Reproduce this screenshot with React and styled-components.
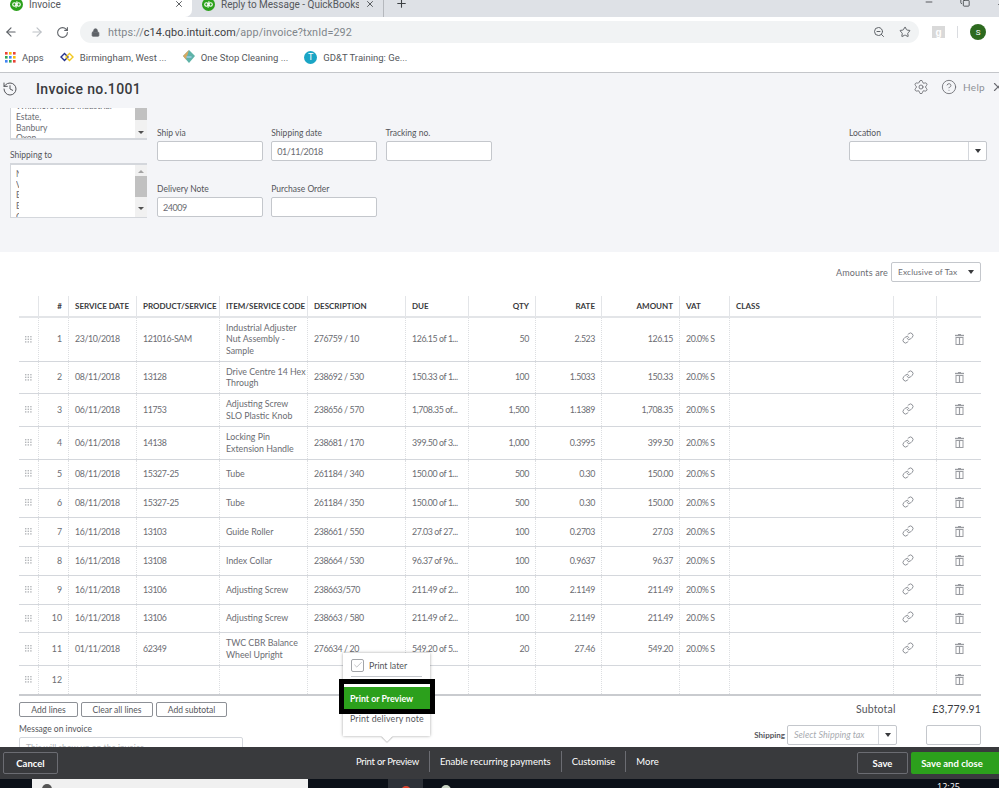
import React from "react";
import styled, { createGlobalStyle } from "styled-components";
import {
  ArrowLeft,
  ArrowRight,
  RotateCw,
  Lock,
  ZoomOut,
  Star,
  Settings,
  CircleHelp,
  History,
  X,
  Plus,
  Link as LinkIcon,
  Check,
  Minus,
  Copy,
} from "lucide-react";

const GlobalStyle = createGlobalStyle`
  html, body {
    margin: 0;
    padding: 0;
    background: #fff;
    overflow: hidden;
  }
  * {
    box-sizing: border-box;
  }
`;

const rows = [
  { n: 1, date: "23/10/2018", product: "121016-SAM", item: "Industrial Adjuster\nNut Assembly -\nSample", desc: "276759 / 10", due: "126.15 of 1...", qty: "50", rate: "2.523", amount: "126.15", h: 44 },
  { n: 2, date: "08/11/2018", product: "13128", item: "Drive Centre 14 Hex\nThrough", desc: "238692 / 530", due: "150.33 of 1...", qty: "100", rate: "1.5033", amount: "150.33", h: 32 },
  { n: 3, date: "06/11/2018", product: "11753", item: "Adjusting Screw\nSLO Plastic Knob", desc: "238656 / 570", due: "1,708.35 of...", qty: "1,500", rate: "1.1389", amount: "1,708.35", h: 33 },
  { n: 4, date: "06/11/2018", product: "14138", item: "Locking Pin\nExtension Handle", desc: "238681 / 170", due: "399.50 of 3...", qty: "1,000", rate: "0.3995", amount: "399.50", h: 33 },
  { n: 5, date: "08/11/2018", product: "15327-25", item: "Tube", desc: "261184 / 340", due: "150.00 of 1...", qty: "500", rate: "0.30", amount: "150.00", h: 29 },
  { n: 6, date: "08/11/2018", product: "15327-25", item: "Tube", desc: "261184 / 350", due: "150.00 of 1...", qty: "500", rate: "0.30", amount: "150.00", h: 29 },
  { n: 7, date: "16/11/2018", product: "13103", item: "Guide Roller", desc: "238661 / 550", due: "27.03 of 27...", qty: "100", rate: "0.2703", amount: "27.03", h: 29 },
  { n: 8, date: "16/11/2018", product: "13108", item: "Index Collar", desc: "238664 / 530", due: "96.37 of 96...", qty: "100", rate: "0.9637", amount: "96.37", h: 29 },
  { n: 9, date: "16/11/2018", product: "13106", item: "Adjusting Screw", desc: "238663/570", due: "211.49 of 2...", qty: "100", rate: "2.1149", amount: "211.49", h: 29 },
  { n: 10, date: "16/11/2018", product: "13106", item: "Adjusting Screw", desc: "238663 / 580", due: "211.49 of 2...", qty: "100", rate: "2.1149", amount: "211.49", h: 28 },
  { n: 11, date: "01/11/2018", product: "62349", item: "TWC CBR Balance\nWheel Upright", desc: "276634 / 20", due: "549.20 of 5...", qty: "20", rate: "27.46", amount: "549.20", h: 33 },
];

const QbLogo = () => (
  <svg width="13" height="13" viewBox="0 0 13 13">
    <circle cx="6.5" cy="6.5" r="6.5" fill="#2ca01c" />
    <circle cx="4.4" cy="6.5" r="1.7" fill="none" stroke="#fff" strokeWidth="1.1" />
    <circle cx="8.6" cy="6.5" r="1.7" fill="none" stroke="#fff" strokeWidth="1.1" />
    <path d="M6.1 4.8v5M6.9 3.2v5" stroke="#fff" strokeWidth="1" />
  </svg>
);

const AppsGrid = () => {
  const colors = ["#ea4335", "#fbbc05", "#ea4335", "#34a853", "#4285f4", "#fbbc05", "#4285f4", "#34a853", "#ea4335"];
  return (
    <svg width="11" height="11" viewBox="0 0 11 11">
      {colors.map((c, i) => (
        <rect key={i} x={(i % 3) * 4} y={Math.floor(i / 3) * 4} width="2.6" height="2.6" fill={c} />
      ))}
    </svg>
  );
};

const DiamondsIcon = () => (
  <svg width="14" height="10" viewBox="0 0 14 10">
    <path d="M4.5 1.5L8 5 4.5 8.5 1 5z" fill="none" stroke="#27348b" strokeWidth="1.4" />
    <path d="M9.5 1.5L13 5 9.5 8.5 6 5z" fill="none" stroke="#f2c81e" strokeWidth="1.4" />
  </svg>
);

const CleaningIcon = () => (
  <svg width="12" height="14" viewBox="0 0 12 14">
    <path d="M6 0l6 6-6 7-6-7z" fill="#5fb3a8" />
    <path d="M6 0L0 6l3 3.5z" fill="#d9a860" />
    <path d="M3.5 6h5v2h-5z" fill="#8cc6d8" />
  </svg>
);

const GripIcon = () => (
  <svg width="7" height="7" viewBox="0 0 7 7">
    {[0, 1, 2].flatMap((r) =>
      [0, 1, 2].map((c) => <rect key={`${r}${c}`} x={c * 2.6} y={r * 2.6} width="1.4" height="1.4" fill="#b4b6ba" />)
    )}
  </svg>
);

const TrashIcon = () => (
  <svg width="9" height="11" viewBox="0 0 9 11" fill="none" stroke="#9a9ca1">
    <path d="M0 1.5h9" strokeWidth="1.4" />
    <path d="M3 0.5h3" strokeWidth="1" />
    <rect x="1" y="3.5" width="7" height="7" strokeWidth="1" />
    <path d="M4.5 3.5v7" strokeWidth="1.2" />
  </svg>
);

const Caret = styled.span`
  display: block;
  width: 0;
  height: 0;
  border-left: 3.5px solid transparent;
  border-right: 3.5px solid transparent;
  border-top: 4px solid #393a3d;
`;

const Page = styled.div`
  position: relative;
  display: flex;
  flex-direction: column;
  width: 999px;
  height: 788px;
  overflow: hidden;
  font-family: Lato, "Open Sans", sans-serif;
  color: #6b6c72;
`;

const TabStrip = styled.div`
  display: flex;
  align-items: flex-start;
  height: 17px;
  flex: none;
  overflow: hidden;
  background: #dee1e6;
  font-family: Roboto, sans-serif;
  font-size: 10px;
  color: #55585c;
`;

const Tab = styled.div`
  display: flex;
  align-items: center;
  gap: 6px;
  width: 192px;
  height: 17px;
  padding: 0 8px 9px 10px;
  background: ${(p) => (p.$active ? "#fff" : "transparent")};
  border-bottom-right-radius: ${(p) => (p.$active ? "7px" : "0")};
  border-right: ${(p) => (p.$active ? "none" : "1px solid #b5b8bd")};
`;

const TabTitle = styled.span`
  flex: 1;
  white-space: nowrap;
  overflow: hidden;
`;

const NewTab = styled.span`
  display: flex;
  margin: -3px 0 0 11px;
  color: #3c4043;
`;

const WindowControls = styled.div`
  display: flex;
  gap: 26px;
  margin: -3px -7px 0 auto;
  color: #3c4043;
`;

const Toolbar = styled.div`
  display: flex;
  align-items: center;
  height: 26px;
  flex: none;
  padding: 4px 0 0 4px;
  gap: 12px;
  background: #fff;
`;

const Omnibox = styled.div`
  display: flex;
  align-items: center;
  width: 839px;
  height: 22px;
  margin-left: -1px;
  padding: 0 8px 0 11px;
  border-radius: 11px;
  background: #f1f3f4;
  color: #5f6368;
`;

const Url = styled.span`
  flex: 1;
  margin-left: 8px;
  font-family: Roboto, sans-serif;
  font-size: 10.8px;
  letter-spacing: 0.1px;
  white-space: nowrap;
  color: #80868b;

  b {
    font-weight: 400;
    color: #3c4043;
  }
`;

const OmniIcons = styled.div`
  display: flex;
  align-items: center;
  gap: 14px;
  color: #5f6368;
`;

const Extension = styled.span`
  display: flex;
  align-items: center;
  justify-content: center;
  width: 13px;
  height: 12px;
  margin-left: 1px;
  background: #d9d9d9;
  font-family: "Liberation Sans", sans-serif;
  font-size: 10px;
  font-weight: 700;
  color: #fff;
`;

const ToolbarDivider = styled.span`
  width: 1px;
  height: 12px;
  background: #dadce0;
`;

const Avatar = styled.span`
  display: flex;
  align-items: center;
  justify-content: center;
  width: 16px;
  height: 16px;
  border-radius: 50%;
  background: #2d6a1f;
  font-family: Roboto, sans-serif;
  font-size: 8px;
  color: #fff;
`;

const Bookmarks = styled.div`
  display: flex;
  align-items: center;
  height: 30px;
  flex: none;
  padding: 0 0 1px 5px;
  gap: 16px;
  background: #fff;
  border-bottom: 1px solid #c4c6ca;
  font-family: Roboto, sans-serif;
  font-size: 9.5px;
  color: #55585c;
`;

const Bookmark = styled.span`
  display: flex;
  align-items: center;
  gap: 6px;
  white-space: nowrap;
`;

const BookmarkT = styled.span`
  display: flex;
  align-items: center;
  justify-content: center;
  width: 13px;
  height: 13px;
  border-radius: 50%;
  background: #1aa5c5;
  font-size: 9px;
  color: #fff;
`;

const Main = styled.div`
  flex: 1;
  min-height: 0;
  overflow: hidden;
  background: #fff;
`;

const Header = styled.header`
  display: flex;
  align-items: center;
  height: 35px;
  padding: 0 0 3px 2px;
  background: #f4f5f8;
`;

const Title = styled.h1`
  margin: 0 0 0 18px;
  font-family: Roboto, sans-serif;
  font-size: 14px;
  font-weight: 500;
  letter-spacing: 0.35px;
  color: #393a3d;
`;

const HeaderTools = styled.div`
  display: flex;
  align-items: center;
  margin: -4px -6px 0 auto;
  color: #6b6c72;
`;

const HelpIcon = styled(CircleHelp)`
  margin-left: 12px;
`;

const HelpLabel = styled.span`
  margin: 0 6px 0 6px;
  font-size: 10px;
  letter-spacing: 0.3px;
  color: #8d9096;
`;

const FormPanel = styled.section`
  display: flex;
  height: 144px;
  padding-left: 10px;
  background: #f4f5f8;
`;

const AddressColumn = styled.div`
  display: flex;
  flex-direction: column;
  width: 137px;
`;

const Label = styled.label`
  display: block;
  height: 14px;
  margin-bottom: 1px;
  font-size: 8.5px;
  line-height: 14px;
  color: #55565b;
  white-space: nowrap;
`;

const AddressBox = styled.div`
  display: flex;
  height: ${(p) => p.$h}px;
  background: #fff;
  border: solid #d4d7dc;
  border-width: ${(p) => (p.$top ? "2px 0 1px 1px" : "0 0 2px 1px")};
  overflow: hidden;
`;

const AddressText = styled.div`
  flex: 1;
  display: flex;
  flex-direction: column;
  justify-content: ${(p) => (p.$bottom ? "flex-start" : "flex-end")};
  padding: ${(p) => (p.$bottom ? "4px 0 0 5px" : "0 0 0 5px")};
  margin-bottom: ${(p) => (p.$bottom ? "0" : "-6px")};
  font-size: 8.5px;
  line-height: 10.7px;
  white-space: nowrap;
`;

const MaskedLine = styled.span`
  display: block;
  width: 3px;
  overflow: hidden;
  flex: none;
`;

const Scrollbar = styled.div`
  display: flex;
  flex-direction: column;
  align-items: center;
  flex: none;
  width: 12px;
  background: #f1f1f1;
`;

const ScrollArrow = styled.span`
  display: block;
  flex: none;
  width: 0;
  height: 0;
  margin: ${(p) => p.$margin};
  border-left: 3.5px solid transparent;
  border-right: 3.5px solid transparent;
  ${(p) => (p.$up ? "border-bottom: 3px solid #a3a3a3;" : "border-top: 3px solid #505050;")}
`;

const ScrollThumb = styled.span`
  display: block;
  flex: none;
  width: 100%;
  height: ${(p) => p.$h}px;
  background: #c1c1c1;
`;

const ShippingLabel = styled(Label)`
  margin: 8px 0 1px;
`;

const FieldGrid = styled.div`
  display: grid;
  grid-template-columns: repeat(3, 106px);
  column-gap: 8.3px;
  row-gap: 21px;
  align-content: start;
  margin-left: 10px;
  padding-top: 18px;
`;

const Input = styled.div`
  display: flex;
  align-items: center;
  height: 20px;
  padding-left: 5px;
  background: #fff;
  border: 1px solid #c4c7cc;
  border-radius: 2px;
  font-size: 9px;
  letter-spacing: -0.45px;
  color: #6b6c72;
`;

const LocationField = styled.div`
  width: 138px;
  margin-left: auto;
  margin-right: 12px;
  padding-top: 18px;
`;

const SelectBox = styled.div`
  display: flex;
  align-items: stretch;
  width: ${(p) => p.$w || "100%"};
  height: 20px;
  background: #fff;
  border: 1px solid #c4c7cc;
  border-radius: 2px;
`;

const SelectValue = styled.span`
  flex: 1;
  min-width: 0;
  padding-left: 6px;
  font-size: ${(p) => (p.$placeholder ? "9px" : "8.3px")};
  line-height: 18px;
  font-style: ${(p) => (p.$placeholder ? "italic" : "normal")};
  color: ${(p) => (p.$placeholder ? "#a8abb0" : "#6b6c72")};
  white-space: nowrap;
`;

const SelectCaret = styled.span`
  display: flex;
  align-items: center;
  justify-content: center;
  flex: none;
  width: 18px;
  border-left: ${(p) => (p.$plain ? "none" : "1px solid #d4d7dc")};
`;

const TableSection = styled.section`
  padding: 10px 18px 0 19px;
  background: #fff;
`;

const AmountsRow = styled.div`
  display: flex;
  align-items: center;
  justify-content: flex-end;
  gap: 3px;
  height: 20px;
  margin-bottom: 14px;
  font-size: 9px;
  letter-spacing: 0.15px;
`;

const columns = "20px 30px 68px 83px 88px 98px 63px 67px 66px 78px 50px 164px 43px 44px";

const Row = styled.div`
  display: grid;
  grid-template-columns: ${columns};
  height: ${(p) => p.$h}px;
  border-bottom: ${(p) => p.$line || "1px solid #d4d7dc"};
`;

const HeadCell = styled.div`
  display: flex;
  align-items: center;
  justify-content: ${(p) => (p.$right ? "flex-end" : "flex-start")};
  padding: 0 6px 1px;
  border-right: ${(p) => (p.$last ? "none" : "1px solid #e3e5e8")};
  font-size: 8px;
  font-weight: 700;
  color: #393a3d;
  white-space: nowrap;
`;

const Cell = styled.div`
  display: flex;
  align-items: center;
  justify-content: ${(p) => (p.$right ? "flex-end" : p.$center ? "center" : "flex-start")};
  padding: 0 6px 1px;
  border-right: ${(p) => (p.$last ? "none" : "1px dotted #dcdee1")};
  font-size: 8.8px;
  line-height: 11.5px;
  color: #6b6c72;
  min-width: 0;
  ${(p) => p.$num && "letter-spacing: -0.4px; white-space: nowrap;"}
`;

const ItemCell = styled(Cell)`
  padding-right: 0;
  white-space: pre;
`;

const LinkCell = styled(Cell)`
  padding: 0 0 3px 8px;
`;

const BelowTable = styled.div`
  display: flex;
  justify-content: space-between;
  padding-top: 6px;
`;

const LeftActions = styled.div`
  width: 224px;
`;

const LineButtons = styled.div`
  display: flex;
  gap: 3px;
`;

const LineButton = styled.button`
  width: ${(p) => p.$w}px;
  height: 15px;
  padding: 0;
  background: #fff;
  border: 1px solid #8d9096;
  border-radius: 2px;
  font-family: inherit;
  font-size: 8.5px;
  color: #55565b;
`;

const MessageLabel = styled(Label)`
  margin: 5px 0 1px;
`;

const MessageBox = styled.div`
  height: 40px;
  padding: 5px 6px;
  border: 1px solid #d4d7dc;
  border-radius: 2px;
  font-size: 8.5px;
  color: #b4b6ba;
  white-space: nowrap;
`;

const Totals = styled.div`
  display: flex;
  flex-direction: column;
  align-items: flex-end;
  padding-top: 1px;
`;

const SubtotalRow = styled.div`
  display: flex;
  justify-content: space-between;
  width: 125px;
  font-size: 10.5px;
  letter-spacing: 0.15px;
  line-height: 12px;
  color: #55565b;
`;

const SubtotalValue = styled.span`
  color: #393a3d;
`;

const ShippingRow = styled.div`
  display: flex;
  align-items: center;
  margin-top: 10px;
`;

const ShippingName = styled.span`
  margin-right: 2px;
  font-size: 8px;
  font-weight: 700;
  color: #55565b;
`;

const ShippingInput = styled(Input)`
  width: 55px;
  margin-left: 29px;
`;

const PrintMenu = styled.div`
  position: absolute;
  top: 653px;
  left: 343px;
  width: 87px;
  height: 83px;
  background: #fff;
  box-shadow: 0 0 3px rgba(0, 0, 0, 0.35);
  font-size: 8.8px;
  color: #55565b;

  &::after {
    content: "";
    position: absolute;
    left: 40px;
    bottom: -4px;
    width: 8px;
    height: 8px;
    background: #fff;
    transform: rotate(45deg);
    box-shadow: 1px 1px 1px rgba(0, 0, 0, 0.2);
  }
`;

const PrintLater = styled.div`
  display: flex;
  align-items: center;
  gap: 5px;
  height: 24px;
  margin: 0 8px;
  padding-top: 1px;
  border-bottom: 1px solid #c4c7cc;
`;

const CheckBox = styled.span`
  display: flex;
  align-items: center;
  justify-content: center;
  width: 13px;
  height: 13px;
  border: 1px solid #a3a5a9;
  border-radius: 2px;
  color: #b4b6ba;
`;

const Highlight = styled.div`
  position: absolute;
  top: 26px;
  left: -4px;
  display: flex;
  width: 96px;
  height: 35px;
  padding-top: 3px;
  background: #fff;
  border: 5px solid #000;
`;

const GreenItem = styled.div`
  flex: 1;
  display: flex;
  align-items: center;
  padding-left: 6px;
  background: #2ca01c;
  font-weight: 700;
  font-size: 8.8px;
  color: #fff;
  white-space: nowrap;
`;

const PrintNote = styled.div`
  position: absolute;
  top: 60px;
  left: 7px;
  letter-spacing: 0.15px;
  white-space: nowrap;
`;

const Footer = styled.footer`
  display: flex;
  align-items: center;
  flex: none;
  height: 32px;
  padding-left: 3px;
  background: #393a3d;
  color: #fff;
`;

const DarkButton = styled.button`
  width: ${(p) => p.$w}px;
  height: 22px;
  padding: 0;
  background: transparent;
  border: 1px solid #6b6c72;
  border-radius: 2px;
  font-family: inherit;
  font-size: 9.5px;
  font-weight: 700;
  color: #fff;
`;

const FooterNav = styled.nav`
  display: flex;
  align-items: center;
  margin: -3px 0 0 288px;
`;

const NavItem = styled.span`
  padding: 3px 10px;
  border-left: ${(p) => (p.$first ? "none" : "1px solid #6b6c72")};
  font-size: 9.5px;
  line-height: 15px;
  letter-spacing: ${(p) => (p.$first ? "-0.25px" : "0")};
  white-space: nowrap;
`;

const FooterActions = styled.div`
  display: flex;
  gap: 3px;
  margin-left: auto;
`;

const SaveClose = styled.button`
  width: 92px;
  height: 22px;
  margin-right: -4px;
  padding: 0 10px 0 0;
  background: #2ca01c;
  border: none;
  border-radius: 2px;
  font-family: inherit;
  font-size: 9.5px;
  font-weight: 700;
  color: #fff;
`;

const Taskbar = styled.div`
  display: flex;
  align-items: flex-start;
  flex: none;
  height: 9px;
  overflow: hidden;
  background: #0b1018;
`;

const TaskWindow = styled.div`
  width: 276px;
  height: 9px;
  margin-left: 32px;
  padding: 5px 0 0 10px;
  background: #f0f0f0;
`;

const TaskDot = styled.span`
  display: block;
  flex: none;
  width: ${(p) => p.$size}px;
  height: ${(p) => p.$size}px;
  border-radius: 50%;
  background: ${(p) => p.$color};
`;

const TaskActive = styled.div`
  display: flex;
  justify-content: center;
  width: 35px;
  height: 9px;
  margin-left: 80px;
  padding-top: 7px;
  background: #2d3138;
`;

const TaskChrome = styled.div`
  margin: 6px 0 0 18px;
`;

const Clock = styled.span`
  margin: 2px 39px 0 auto;
  font-family: "Open Sans", sans-serif;
  font-size: 9px;
  line-height: 11px;
  color: #fff;
`;

const App = () => {
  return (
    <Page>
      <GlobalStyle />
      <TabStrip>
        <Tab $active>
          <QbLogo />
          <TabTitle>Invoice</TabTitle>
          <X size={10} color="#3c4043" />
        </Tab>
        <Tab>
          <QbLogo />
          <TabTitle>Reply to Message - QuickBooks Online</TabTitle>
          <X size={10} color="#3c4043" />
        </Tab>
        <NewTab>
          <Plus size={13} />
        </NewTab>
        <WindowControls>
          <Minus size={10} />
          <Copy size={10} />
          <X size={10} />
        </WindowControls>
      </TabStrip>

      <Toolbar>
        <ArrowLeft size={14} color="#5f6368" />
        <ArrowRight size={14} color="#bdc1c6" />
        <RotateCw size={13} color="#5f6368" />
        <Omnibox>
          <Lock size={9} fill="#5f6368" />
          <Url>
            https://<b>c14.qbo.intuit.com</b>/app/invoice?txnId=292
          </Url>
          <OmniIcons>
            <ZoomOut size={12} />
            <Star size={12} />
          </OmniIcons>
        </Omnibox>
        <Extension>g</Extension>
        <ToolbarDivider />
        <Avatar>S</Avatar>
      </Toolbar>

      <Bookmarks>
        <Bookmark>
          <AppsGrid />
          Apps
        </Bookmark>
        <Bookmark>
          <DiamondsIcon />
          Birmingham, West ...
        </Bookmark>
        <Bookmark>
          <CleaningIcon />
          One Stop Cleaning ...
        </Bookmark>
        <Bookmark>
          <BookmarkT>T</BookmarkT>
          GD&amp;T Training: Ge...
        </Bookmark>
      </Bookmarks>

      <Main>
        <Header>
          <History size={16} strokeWidth={1.5} color="#55565b" />
          <Title>Invoice no.1001</Title>
          <HeaderTools>
            <Settings size={16} strokeWidth={1.3} />
            <HelpIcon size={16} strokeWidth={1.3} />
            <HelpLabel>Help</HelpLabel>
            <X size={14} />
          </HeaderTools>
        </Header>

        <FormPanel>
          <AddressColumn>
            <AddressBox $h={32}>
              <AddressText>
                <span>Whitmore Road Industrial</span>
                <span>Estate,</span>
                <span>Banbury</span>
                <span>Oxon</span>
              </AddressText>
              <Scrollbar>
                <ScrollThumb $h={12} />
                <ScrollArrow $margin="11px 0 0" />
              </Scrollbar>
            </AddressBox>
            <ShippingLabel>Shipping to</ShippingLabel>
            <AddressBox $h={55} $top>
              <AddressText $bottom>
                {["N", "V", "E", "E", "C"].map((letter, i) => (
                  <MaskedLine key={i}>{letter}</MaskedLine>
                ))}
              </AddressText>
              <Scrollbar>
                <ScrollArrow $up $margin="5px 0 3px" />
                <ScrollThumb $h={21} />
                <ScrollArrow $margin="10px 0 0" />
              </Scrollbar>
            </AddressBox>
          </AddressColumn>

          <FieldGrid>
            <div>
              <Label>Ship via</Label>
              <Input />
            </div>
            <div>
              <Label>Shipping date</Label>
              <Input>01/11/2018</Input>
            </div>
            <div>
              <Label>Tracking no.</Label>
              <Input />
            </div>
            <div>
              <Label>Delivery Note</Label>
              <Input>24009</Input>
            </div>
            <div>
              <Label>Purchase Order</Label>
              <Input />
            </div>
          </FieldGrid>

          <LocationField>
            <Label>Location</Label>
            <SelectBox>
              <SelectValue />
              <SelectCaret>
                <Caret />
              </SelectCaret>
            </SelectBox>
          </LocationField>
        </FormPanel>

        <TableSection>
          <AmountsRow>
            <span>Amounts are</span>
            <SelectBox $w="90px">
              <SelectValue>Exclusive of Tax</SelectValue>
              <SelectCaret $plain>
                <Caret />
              </SelectCaret>
            </SelectBox>
          </AmountsRow>

          <Row $h={22} $line="2px solid #e3e5e8">
            <HeadCell />
            <HeadCell $right>#</HeadCell>
            <HeadCell>SERVICE DATE</HeadCell>
            <HeadCell>PRODUCT/SERVICE</HeadCell>
            <HeadCell>ITEM/SERVICE CODE</HeadCell>
            <HeadCell>DESCRIPTION</HeadCell>
            <HeadCell>DUE</HeadCell>
            <HeadCell $right>QTY</HeadCell>
            <HeadCell $right>RATE</HeadCell>
            <HeadCell $right>AMOUNT</HeadCell>
            <HeadCell>VAT</HeadCell>
            <HeadCell>CLASS</HeadCell>
            <HeadCell />
            <HeadCell $last />
          </Row>

          {rows.map((row) => (
            <Row key={row.n} $h={row.h}>
              <Cell $center>
                <GripIcon />
              </Cell>
              <Cell $right>{row.n}</Cell>
              <Cell $num>{row.date}</Cell>
              <Cell $num>{row.product}</Cell>
              <ItemCell>{row.item}</ItemCell>
              <Cell $num>{row.desc}</Cell>
              <Cell $num>{row.due}</Cell>
              <Cell $right $num>{row.qty}</Cell>
              <Cell $right $num>{row.rate}</Cell>
              <Cell $right $num>{row.amount}</Cell>
              <Cell $num>20.0% S</Cell>
              <Cell />
              <LinkCell>
                <LinkIcon size={12} color="#8d9096" />
              </LinkCell>
              <Cell $center $last>
                <TrashIcon />
              </Cell>
            </Row>
          ))}

          <Row $h={30} $line="2px solid #c9cbcf">
            <Cell $center>
              <GripIcon />
            </Cell>
            <Cell $right>12</Cell>
            <Cell />
            <Cell />
            <Cell />
            <Cell />
            <Cell />
            <Cell />
            <Cell />
            <Cell />
            <Cell />
            <Cell />
            <Cell />
            <Cell $center $last>
              <TrashIcon />
            </Cell>
          </Row>

          <BelowTable>
            <LeftActions>
              <LineButtons>
                <LineButton $w={59}>Add lines</LineButton>
                <LineButton $w={72}>Clear all lines</LineButton>
                <LineButton $w={71}>Add subtotal</LineButton>
              </LineButtons>
              <MessageLabel>Message on invoice</MessageLabel>
              <MessageBox>This will show up on the invoice</MessageBox>
            </LeftActions>
            <Totals>
              <SubtotalRow>
                <span>Subtotal</span>
                <SubtotalValue>£3,779.91</SubtotalValue>
              </SubtotalRow>
              <ShippingRow>
                <ShippingName>Shipping</ShippingName>
                <SelectBox $w="110px">
                  <SelectValue $placeholder>Select Shipping tax</SelectValue>
                  <SelectCaret>
                    <Caret />
                  </SelectCaret>
                </SelectBox>
                <ShippingInput />
              </ShippingRow>
            </Totals>
          </BelowTable>
        </TableSection>
      </Main>

      <PrintMenu>
        <PrintLater>
          <CheckBox>
            <Check size={10} />
          </CheckBox>
          Print later
        </PrintLater>
        <Highlight>
          <GreenItem>Print or Preview</GreenItem>
        </Highlight>
        <PrintNote>Print delivery note</PrintNote>
      </PrintMenu>

      <Footer>
        <DarkButton $w={55}>Cancel</DarkButton>
        <FooterNav>
          <NavItem $first>Print or Preview</NavItem>
          <NavItem>Enable recurring payments</NavItem>
          <NavItem>Customise</NavItem>
          <NavItem>More</NavItem>
        </FooterNav>
        <FooterActions>
          <DarkButton $w={51}>Save</DarkButton>
          <SaveClose>Save and close</SaveClose>
        </FooterActions>
      </Footer>

      <Taskbar>
        <TaskWindow>
          <TaskDot $size={10} $color="#555" />
        </TaskWindow>
        <TaskActive>
          <TaskDot $size={10} $color="#d9432f" />
        </TaskActive>
        <TaskChrome>
          <TaskDot $size={10} $color="#c9d4c4" />
        </TaskChrome>
        <Clock>12:25</Clock>
      </Taskbar>
    </Page>
  );
};

export default App;
